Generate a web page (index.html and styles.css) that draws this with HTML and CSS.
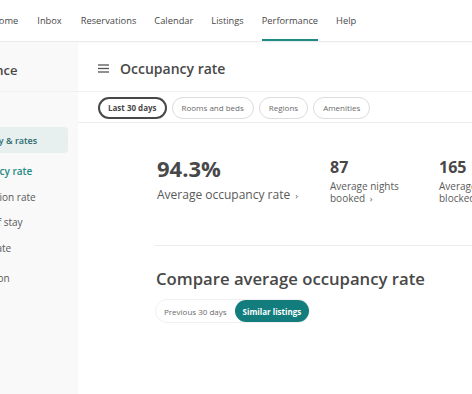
FILE: index.html
```html
<!DOCTYPE html>
<html lang="en">
<head>
    <meta charset="UTF-8">
    <meta name="viewport" content="width=device-width, initial-scale=1.0">
    <title>Occupancy rate</title>
    <link rel="stylesheet" href="styles.css">
</head>
<body>
    <header class="topnav">
        <a class="nav-item">Home</a>
        <a class="nav-item">Inbox</a>
        <a class="nav-item">Reservations</a>
        <a class="nav-item">Calendar</a>
        <a class="nav-item">Listings</a>
        <a class="nav-item active">Performance</a>
        <a class="nav-item">Help</a>
    </header>

    <div class="page">
        <aside class="sidebar">
            <div class="sidebar-inner">
                <h2 class="sidebar-title">Performance</h2>
                <div class="side-group active">Occupancy &amp; rates</div>
                <a class="side-link current">Occupancy rate</a>
                <a class="side-link">Cancellation rate</a>
                <a class="side-link">Length of stay</a>
                <a class="side-link">Nightly rate</a>
                <a class="side-link spaced">Conversion</a>
            </div>
        </aside>

        <main class="main">
            <div class="main-header">
                <span class="menu-icon">
                    <svg width="11" height="9" viewBox="0 0 11 9" fill="none" stroke="currentColor" stroke-width="1.3"><line x1="0" y1="1" x2="11" y2="1"/><line x1="0" y1="4.5" x2="11" y2="4.5"/><line x1="0" y1="8" x2="11" y2="8"/></svg>
                </span>
                <h1 class="page-title">Occupancy rate</h1>
            </div>

            <div class="filters">
                <button class="chip selected">Last 30 days</button>
                <button class="chip">Rooms and beds</button>
                <button class="chip">Regions</button>
                <button class="chip">Amenities</button>
            </div>

            <div class="content">
                <div class="stats">
                    <div class="stat big">
                        <p class="value">94.3%</p>
                        <p class="label">Average occupancy rate <span class="chev">›</span></p>
                    </div>
                    <div class="stat">
                        <p class="value">87</p>
                        <p class="label">Average nights<br>booked <span class="chev">›</span></p>
                    </div>
                    <div class="stat">
                        <p class="value">165</p>
                        <p class="label">Average nights<br>blocked <span class="chev">›</span></p>
                    </div>
                </div>

                <h2 class="section-title">Compare average occupancy rate</h2>

                <div class="toggle">
                    <button class="toggle-btn">Previous 30 days</button>
                    <button class="toggle-btn on">Similar listings</button>
                </div>
            </div>
        </main>
    </div>
</body>
</html>
```
FILE: styles.css
```css
html, body {
    margin: 0;
    padding: 0;
    background: white;
    overflow: hidden;
}

body {
    font-family: "Open Sans", "Liberation Sans", sans-serif;
    color: #484848;
    width: 472px;
    height: 394px;
}

p, h1, h2 {
    margin: 0;
}

button {
    font-family: inherit;
    cursor: pointer;
}

.topnav {
    height: 41px;
    border-bottom: 1px solid #ebebeb;
    display: flex;
    align-items: stretch;
    gap: 19px;
    margin-left: -8px;
    box-shadow: 0 1px 2px rgba(0, 0, 0, .03);
}

.topnav .nav-item {
    font-size: 9.3px;
    color: #484848;
    display: flex;
    align-items: center;
    border-bottom: 2px solid transparent;
    padding-top: 2px;
    white-space: nowrap;
}

.topnav .nav-item:nth-child(n+4) {
    margin-left: -1px;
}

.topnav .nav-item.active {
    border-bottom-color: #1f8a83;
}

.page {
    display: flex;
    height: 352px;
}

.sidebar {
    width: 78px;
    flex: none;
    background: #f9f9f9;
    overflow: hidden;
}

.sidebar-inner {
    margin-left: -43px;
    display: flex;
    flex-direction: column;
}

.sidebar-title {
    font-size: 13px;
    font-weight: 600;
    margin: 19px 0 0 -21px;
    white-space: nowrap;
}

.side-group {
    margin: 48px 0 0 -1px;
    width: 112px;
    height: 26px;
    box-sizing: border-box;
    display: flex;
    align-items: center;
    background: #e7efef;
    border-radius: 4px;
    font-size: 9px;
    font-weight: 600;
    color: #2b6b6e;
    white-space: nowrap;
}

.side-link {
    font-size: 10px;
    color: #585858;
    white-space: nowrap;
    line-height: 14px;
    margin-top: 11.5px;
}

.side-link.current {
    color: #1f8a83;
    font-weight: 600;
    margin-top: 11px;
}

.side-link.spaced {
    margin-top: 16px;
}

.main {
    flex: 1;
    min-width: 0;
}

.main-header {
    height: 50px;
    display: flex;
    align-items: center;
    gap: 11px;
    padding: 3px 0 0 98px;
    box-sizing: border-box;
    border-bottom: 1px solid #f0f0f0;
    margin-left: -78px;
}

.menu-icon {
    display: flex;
    color: #555;
}

.page-title {
    font-size: 14px;
    font-weight: 600;
}

.filters {
    height: 31px;
    display: flex;
    align-items: center;
    gap: 5px;
    padding: 1px 0 0 20px;
    border-bottom: 1px solid #ececec;
    box-sizing: border-box;
}

.chip {
    height: 22px;
    padding: 0 9px;
    border: 1px solid #dcdcdc;
    border-radius: 11px;
    background: white;
    font-size: 8px;
    color: #6a6a6a;
    white-space: nowrap;
}

.chip.selected {
    border: 2px solid #484848;
    color: #484848;
    font-weight: 700;
    padding: 0 8px;
}

.content {
    padding-left: 77px;
}

.stats {
    display: flex;
    padding-top: 34px;
    padding-bottom: 40px;
    border-bottom: 1px solid #ececec;
    white-space: nowrap;
}

.stat .value {
    font-size: 16px;
    font-weight: 700;
    line-height: 20px;
}

.stat .label {
    font-size: 10px;
    line-height: 12px;
    color: #5a5a5a;
    margin-top: 3px;
}

.stat {
    width: 107px;
    padding-left: 2px;
    flex: none;
}

.stat.big {
    width: 171px;
}

.stat.big .value {
    font-size: 22px;
    line-height: 26px;
    margin-top: -2px;
}

.stat.big .label {
    font-size: 12px;
    line-height: 16px;
    margin-top: 6px;
}

.chev {
    font-size: 9px;
    margin-left: 2px;
}

.section-title {
    font-size: 16.7px;
    font-weight: 600;
    margin-top: 21px;
    padding-left: 1px;
    white-space: nowrap;
}

.toggle {
    display: inline-flex;
    margin-top: 9px;
    border: 1px solid #f0f0f0;
    border-radius: 12px;
}

.toggle-btn {
    height: 22px;
    padding: 0 8px;
    border: none;
    border-radius: 11px;
    background: transparent;
    font-size: 8px;
    color: #6a6a6a;
    white-space: nowrap;
}

.toggle-btn.on {
    background: #137d7d;
    color: white;
    font-weight: 700;
}
```
